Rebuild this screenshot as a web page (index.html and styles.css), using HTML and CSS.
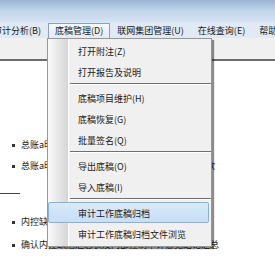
FILE: index.html
```html
<!DOCTYPE html>
<html lang="zh-CN">
<head>
  <meta charset="UTF-8">
  <title>底稿管理</title>
  <link rel="stylesheet" href="styles.css">
</head>
<body>
<div class="window">
  <div class="titlebar"></div>
  <div class="menubar">
    <span class="menu-item first">审计分析(B)</span>
    <span class="menu-item open">底稿管理(D)</span>
    <span class="menu-item">联网集团管理(U)</span>
    <span class="menu-item">在线查询(E)</span>
    <span class="menu-item">帮助(H)</span>
  </div>
  <div class="toolbar"></div>
  <div class="content">
    <ul class="items top">
      <li>总账a明细账与报表科目金额核对</li>
      <li>总账a明细账与报表科目金额核对差异情况说明款</li>
    </ul>
    <div class="rule"></div>
    <ul class="items">
      <li>内控缺陷认定及整改情况</li>
      <li class="last">确认内控缺陷汇总表及内部控制审计意见结论汇总</li>
    </ul>
  </div>

  <div class="dropdown">
    <div class="dd-item">打开附注(Z)</div>
    <div class="dd-item">打开报告及说明</div>
    <div class="dd-sep"></div>
    <div class="dd-item">底稿项目维护(H)</div>
    <div class="dd-item">底稿恢复(G)</div>
    <div class="dd-item">批量签名(Q)</div>
    <div class="dd-sep"></div>
    <div class="dd-item">导出底稿(O)</div>
    <div class="dd-item">导入底稿(I)</div>
    <div class="dd-sep"></div>
    <div class="dd-item active">审计工作底稿归档</div>
    <div class="dd-item">审计工作底稿归档文件浏览</div>
  </div>
</div>
</body>
</html>
```

FILE: styles.css
```css
* { box-sizing: border-box; }
body { margin: 0; background: #fff; font-family: "Noto Sans CJK SC", "Noto Sans", sans-serif; font-size: 9px; color: #1a1a1a; }
.window { position: relative; width: 275px; height: 266px; overflow: hidden; background: #fff; }

.titlebar { height: 23px; background: linear-gradient(#9db6d5, #bfd3ea 45%, #d8e5f4); }

.menubar { height: 15px; display: flex; align-items: stretch; margin-left: -14px; background: #e0e9f4; white-space: nowrap; }
.menu-item { padding: 0 6px; line-height: 14px; border: 1px solid transparent; border-bottom: none; }
.menu-item.open { background: linear-gradient(#f6f8fb, #e4eaf2); border-color: #8f9fb5; }

.toolbar { height: 23px; background: #f0f0f0; border-bottom: 2px solid #6c6c6c; }

.content { padding-top: 73px; }
.items { list-style: none; margin: 0; padding: 0 0 0 12px; }
.items li { height: 21px; line-height: 21px; white-space: nowrap; }
.items li::before { content: ""; display: inline-block; width: 3px; height: 3px; background: #333; margin-right: 6px; vertical-align: middle; }
.items li.last { margin-top: 2px; }
.items.top { margin-bottom: 17px; }
.rule { width: 20px; height: 1px; background: #444; margin-bottom: 17px; }

.dropdown {
  position: absolute; left: 47px; top: 38px; width: 165px;
  padding: 1px 0 2px;
  border: 1px solid #979797;
  background: linear-gradient(to right, #fafafa, #d5d5d5 20px, #fff 20px, #fff 21px, #f0f0f0 21px);
  box-shadow: 2px 2px 1px rgba(0, 0, 0, 0.45);
}
.dd-item { height: 21px; line-height: 21px; padding-left: 29px; white-space: nowrap; border: 1px solid transparent; margin: 0 2px 0 0; }
.dd-item.active { background: linear-gradient(#d9e9fa, #c6def7); border-color: #86b0e0; border-radius: 2px; }
.dd-sep { height: 5px; margin-left: 22px; padding-top: 1px; }
.dd-sep::after { content: ""; display: block; height: 1px; background: #707070; border-bottom: 1px solid #fff; box-sizing: content-box; }
```
